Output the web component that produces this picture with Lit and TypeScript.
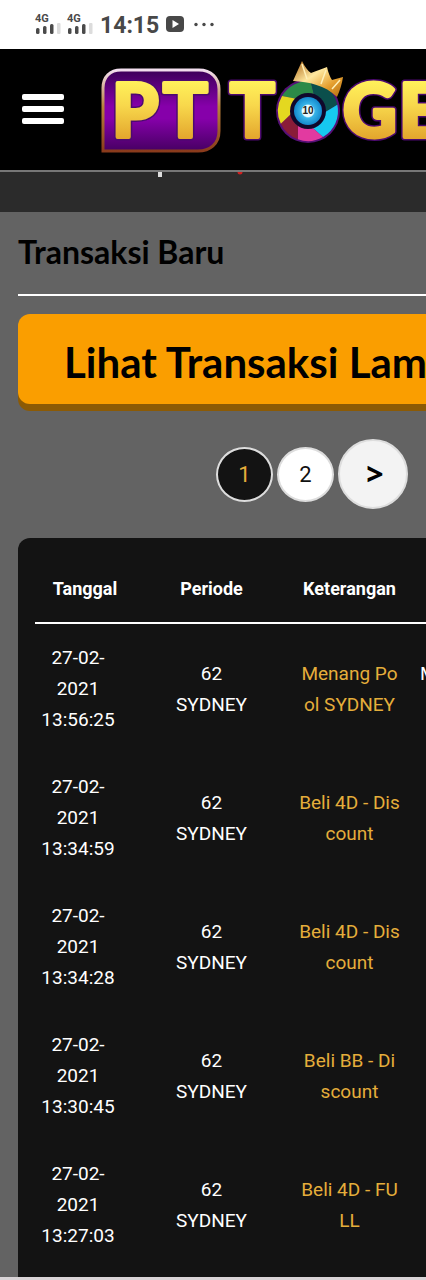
import { LitElement, html, css, svg } from "lit";
import { customElement } from "lit/decorators.js";

interface Row {
  date: string[];
  note: string[];
  amount?: string;
}

const rows: Row[] = [
  { date: ["27-02-", "2021", "13:56:25"], note: ["Menang Po", "ol SYDNEY"], amount: "M" },
  { date: ["27-02-", "2021", "13:34:59"], note: ["Beli 4D - Dis", "count"] },
  { date: ["27-02-", "2021", "13:34:28"], note: ["Beli 4D - Dis", "count"] },
  { date: ["27-02-", "2021", "13:30:45"], note: ["Beli BB - Di", "scount"] },
  { date: ["27-02-", "2021", "13:27:03"], note: ["Beli 4D - FU", "LL"] },
];

const lines = (parts: string[]) => parts.map((p, i) => (i ? html`<br />${p}` : p));

const signal = html`
  <svg class="signal" width="26" height="22" viewBox="0 0 26 22" aria-hidden="true">
    <text x="0" y="8" font-size="11" font-weight="700" fill="#4a4a4a">4G</text>
    <rect x="1" y="14" width="3.500" height="6" rx="1.5" fill="#4a4a4a" />
    <rect x="8" y="12" width="3.500" height="8" rx="1.5" fill="#4a4a4a" />
    <rect x="15" y="10" width="3.500" height="10" rx="1.5" fill="#4a4a4a" />
    <rect x="22" y="9" width="3.500" height="11" rx="1" fill="#dcdcdc" />
  </svg>
`;

@customElement("status-bar")
export class StatusBar extends LitElement {
  static styles = css`
    :host {
      display: flex;
      align-items: center;
      height: 49px;
      padding-left: 35px;
      background: #fff;
      color: #484848;
      font-family: Roboto, sans-serif;
    }
    .signal {
      margin-right: 6px;
      overflow: visible;
    }
    .time {
      font-size: 23px;
      font-weight: 700;
      line-height: 28px;
      margin: 2px 7px 0 1px;
    }
  `;
  render() {
    return html`
      ${signal}${signal}
      <span class="time">14:15</span>
      <svg width="50" height="18" viewBox="0 0 50 18" aria-hidden="true">
        <rect x="0" y="0" width="18" height="16" rx="4" fill="#484848" />
        <path d="M6.500 4v8l6.500-4z" fill="#fff" />
        <circle cx="30" cy="8.500" r="1.700" fill="#484848" />
        <circle cx="38" cy="8.500" r="1.700" fill="#484848" />
        <circle cx="46" cy="8.500" r="1.700" fill="#484848" />
      </svg>
    `;
  }
}

@customElement("brand-logo")
export class BrandLogo extends LitElement {
  static styles = css`
    :host {
      display: block;
      flex: none;
    }
    svg {
      display: block;
    }
    .letter {
      font-family: Lato, sans-serif;
      font-weight: 900;
      font-size: 74px;
      fill: url(#gold);
      stroke: url(#gold);
      stroke-width: 4px;
      stroke-linejoin: round;
    }
    .halo {
      stroke: #4c0a70;
      stroke-width: 7px;
      fill: #4c0a70;
    }
    .ball {
      font-family: "Liberation Sans", sans-serif;
      font-size: 10px;
      font-weight: 700;
      fill: #222;
    }
  `;
  private wedge(from: number, to: number, fill: string) {
    const pt = (a: number, r: number) => {
      const t = (a * Math.PI) / 180;
      return `${207 + r * Math.cos(t)} ${51 + r * Math.sin(t)}`;
    };
    return svg`<path fill=${fill}
      d="M${pt(from + 16, 17)} L${pt(from, 30)} A30 30 0 0 1 ${pt(to, 30)} L${pt(to + 16, 17)} A17 17 0 0 0 ${pt(from + 16, 17)}z" />`;
  }
  render() {
    const letters: [string, number][] = [["P", 11], ["T", 62], ["T", 129], ["G", 242], ["E", 298]];
    return html`
      <svg width="380" height="96" viewBox="0 0 380 96" role="img" aria-label="PT TOGEL">
        <defs>
          <linearGradient id="gold" gradientUnits="userSpaceOnUse" x1="0" y1="22" x2="0" y2="80">
            <stop offset="0" stop-color="#fff05a" />
            <stop offset="0.4" stop-color="#f8d84c" />
            <stop offset="1" stop-color="#e2a42c" />
          </linearGradient>
          <linearGradient id="rim" x1="0" y1="0" x2="0" y2="1">
            <stop offset="0" stop-color="#f3dff0" />
            <stop offset="0.45" stop-color="#b7823c" />
            <stop offset="1" stop-color="#8a3b1c" />
          </linearGradient>
          <linearGradient id="plum" x1="0" y1="0" x2="0" y2="1">
            <stop offset="0" stop-color="#3c0058" />
            <stop offset="0.45" stop-color="#8600aa" />
            <stop offset="0.6" stop-color="#8600aa" />
            <stop offset="1" stop-color="#460062" />
          </linearGradient>
          <linearGradient id="crown" x1="0" y1="0" x2="1" y2="1">
            <stop offset="0" stop-color="#a85f10" />
            <stop offset="0.4" stop-color="#ffe9a0" />
            <stop offset="0.7" stop-color="#e6a030" />
            <stop offset="1" stop-color="#b06a10" />
          </linearGradient>
          <radialGradient id="pool">
            <stop offset="0.4" stop-color="#e8faff" />
            <stop offset="0.5" stop-color="#38b4e8" />
            <stop offset="1" stop-color="#1388cc" />
          </radialGradient>
        </defs>
        <path
          d="M2 91V28C2 17 9 10 20 10H98C110 10 118 18 118 29V71C118 84 109 91 97 91Z"
          fill="url(#plum)" stroke="url(#rim)" stroke-width="3" />
        ${letters.map(([c, x]) => svg`<text class="letter halo" x=${x} y="77" aria-hidden="true">${c}</text>`)}
        ${letters.map(([c, x]) => svg`<text class="letter" x=${x} y="77">${c}</text>`)}
        <circle cx="207" cy="51" r="32" fill="#571078" />
        ${this.wedge(-150, -85, "#2c8a48")}
        ${this.wedge(-85, -12, "#0b4f4c")}
        ${this.wedge(-12, 60, "#16c8f0")}
        ${this.wedge(60, 110, "#e23aa0")}
        ${this.wedge(110, 155, "#8a1c38")}
        ${this.wedge(155, 210, "#e4d820")}
        <circle cx="207" cy="51" r="18" fill="#10082c" />
        <circle cx="207" cy="51" r="14" fill="url(#pool)" />
        <text class="ball" x="207" y="54" text-anchor="middle">10</text>
        <path d="M192 21L201 1C204 7 207 11 210 13C215 11 221 9 226 7C227 12 229 17 231 20L242 17C241 24 239 30 236 37C224 25 208 22 192 21Z" fill="url(#crown)" />
        <path d="M201 4L206 19M225 10L220 24M239 20L231 29" stroke="#fff0b8" stroke-width="1.500" />
      </svg>
    `;
  }
}

@customElement("app-root")
export class AppRoot extends LitElement {
  static styles = css`
    :host {
      display: flex;
      flex-direction: column;
      min-height: 100vh;
      overflow: hidden;
      background: #636363;
      font-family: Roboto, sans-serif;
      font-size: 18px;
      line-height: 31px;
      color: #fff;
    }
    * {
      box-sizing: border-box;
    }
    .top {
      display: flex;
      align-items: flex-start;
      height: 123px;
      padding: 11px 0 0 22px;
      gap: 37px;
      background: #000;
      border-bottom: 2px solid #777;
      overflow: hidden;
    }
    .menu {
      display: flex;
      flex: none;
      flex-direction: column;
      gap: 6px;
      width: 42px;
      margin-top: 34px;
      padding: 0;
      border: 0;
      background: none;
    }
    .bar {
      height: 6px;
      border-radius: 2px;
      background: #fff;
    }
    .strip {
      height: 40px;
      background: #2b2b2b;
    }
    .strip svg {
      display: block;
    }
    main {
      flex: 1;
      display: flex;
      flex-direction: column;
      padding-left: 18px;
    }
    h1 {
      margin: 0;
      padding: 20px 0 22px;
      border-bottom: 2px solid #fff;
      color: #000;
      font: 700 32px/40px Lato, sans-serif;
    }
    .older {
      align-self: flex-start;
      flex: none;
      min-width: 100%;
      margin-top: 18px;
      padding: 18px 46px 12px;
      border: 0;
      border-radius: 12px;
      background: #fa9e00;
      box-shadow: 0 7px 0 #8b5a05;
      color: #000;
      font: 700 42px/60px Lato, sans-serif;
      text-align: left;
      white-space: nowrap;
    }
    .pager {
      display: flex;
      align-items: center;
      justify-content: flex-end;
      gap: 4px;
      margin-top: 35px;
      padding-right: 18px;
    }
    .page {
      display: grid;
      place-items: center;
      width: 57px;
      height: 55px;
      border: 2px solid #ddd;
      border-radius: 50%;
      background: #fff;
      color: #111;
      font-size: 22px;
      text-decoration: none;
    }
    .current {
      background: #131313;
      color: #e5ae3b;
    }
    .next {
      width: 70px;
      height: 70px;
      padding-left: 4px;
      background: #f3f3f3;
      color: #000;
      font: 800 30px/32px "Noto Sans", sans-serif;
    }
    .card {
      flex: 1;
      margin-top: 29px;
      padding: 18px 0 4px 17px;
      border-radius: 12px 0 0 0;
      background: #131313;
    }
    table {
      width: 100%;
      min-width: 500px;
      table-layout: fixed;
      border-collapse: separate;
      border-spacing: 0;
    }
    .narrow {
      width: 100px;
    }
    .medium {
      width: 153px;
    }
    .wide {
      width: 123px;
    }
    th {
      padding: 17px 0 18px;
      border-bottom: 2px solid #fff;
      font-weight: 700;
    }
    td {
      padding: 18px 0;
      font-size: 19px;
      text-align: center;
      white-space: nowrap;
    }
    .date {
      padding-right: 14px;
    }
    .note {
      color: #e5ae3b;
    }
    .amount {
      padding: 18px 0 49px 9px;
      text-align: left;
    }
    footer {
      height: 3px;
      background: #d9d4d7;
    }
  `;

  render() {
    return html`
      <status-bar></status-bar>
      <header class="top">
        <button class="menu" aria-label="Menu">
          <span class="bar"></span><span class="bar"></span><span class="bar"></span>
        </button>
        <brand-logo></brand-logo>
      </header>
      <div class="strip">
        <svg width="260" height="6" aria-hidden="true">
          <rect x="158" width="4" height="5" fill="#ddd" />
          <circle cx="240" cy="0" r="2.500" fill="#d02020" />
        </svg>
      </div>
      <main>
        <h1>Transaksi Baru</h1>
        <button class="older">Lihat Transaksi Lama</button>
        <nav class="pager" aria-label="Halaman">
          <a class="page current" href="#1" aria-current="page">1</a>
          <a class="page" href="#2">2</a>
          <a class="page next" href="#2" rel="next">&gt;</a>
        </nav>
        <section class="card">
          <table>
            <colgroup>
              <col class="narrow" /><col class="medium" /><col class="wide" /><col />
            </colgroup>
            <thead>
              <tr><th>Tanggal</th><th>Periode</th><th>Keterangan</th><th></th></tr>
            </thead>
            <tbody>
              ${rows.map(
                (r) => html`<tr>
                  <td class="date">${lines(r.date)}</td>
                  <td>62<br />SYDNEY</td>
                  <td class="note">${lines(r.note)}</td>
                  <td class="amount">${r.amount ?? ""}</td>
                </tr>`
              )}
            </tbody>
          </table>
        </section>
      </main>
      <footer></footer>
    `;
  }
}
